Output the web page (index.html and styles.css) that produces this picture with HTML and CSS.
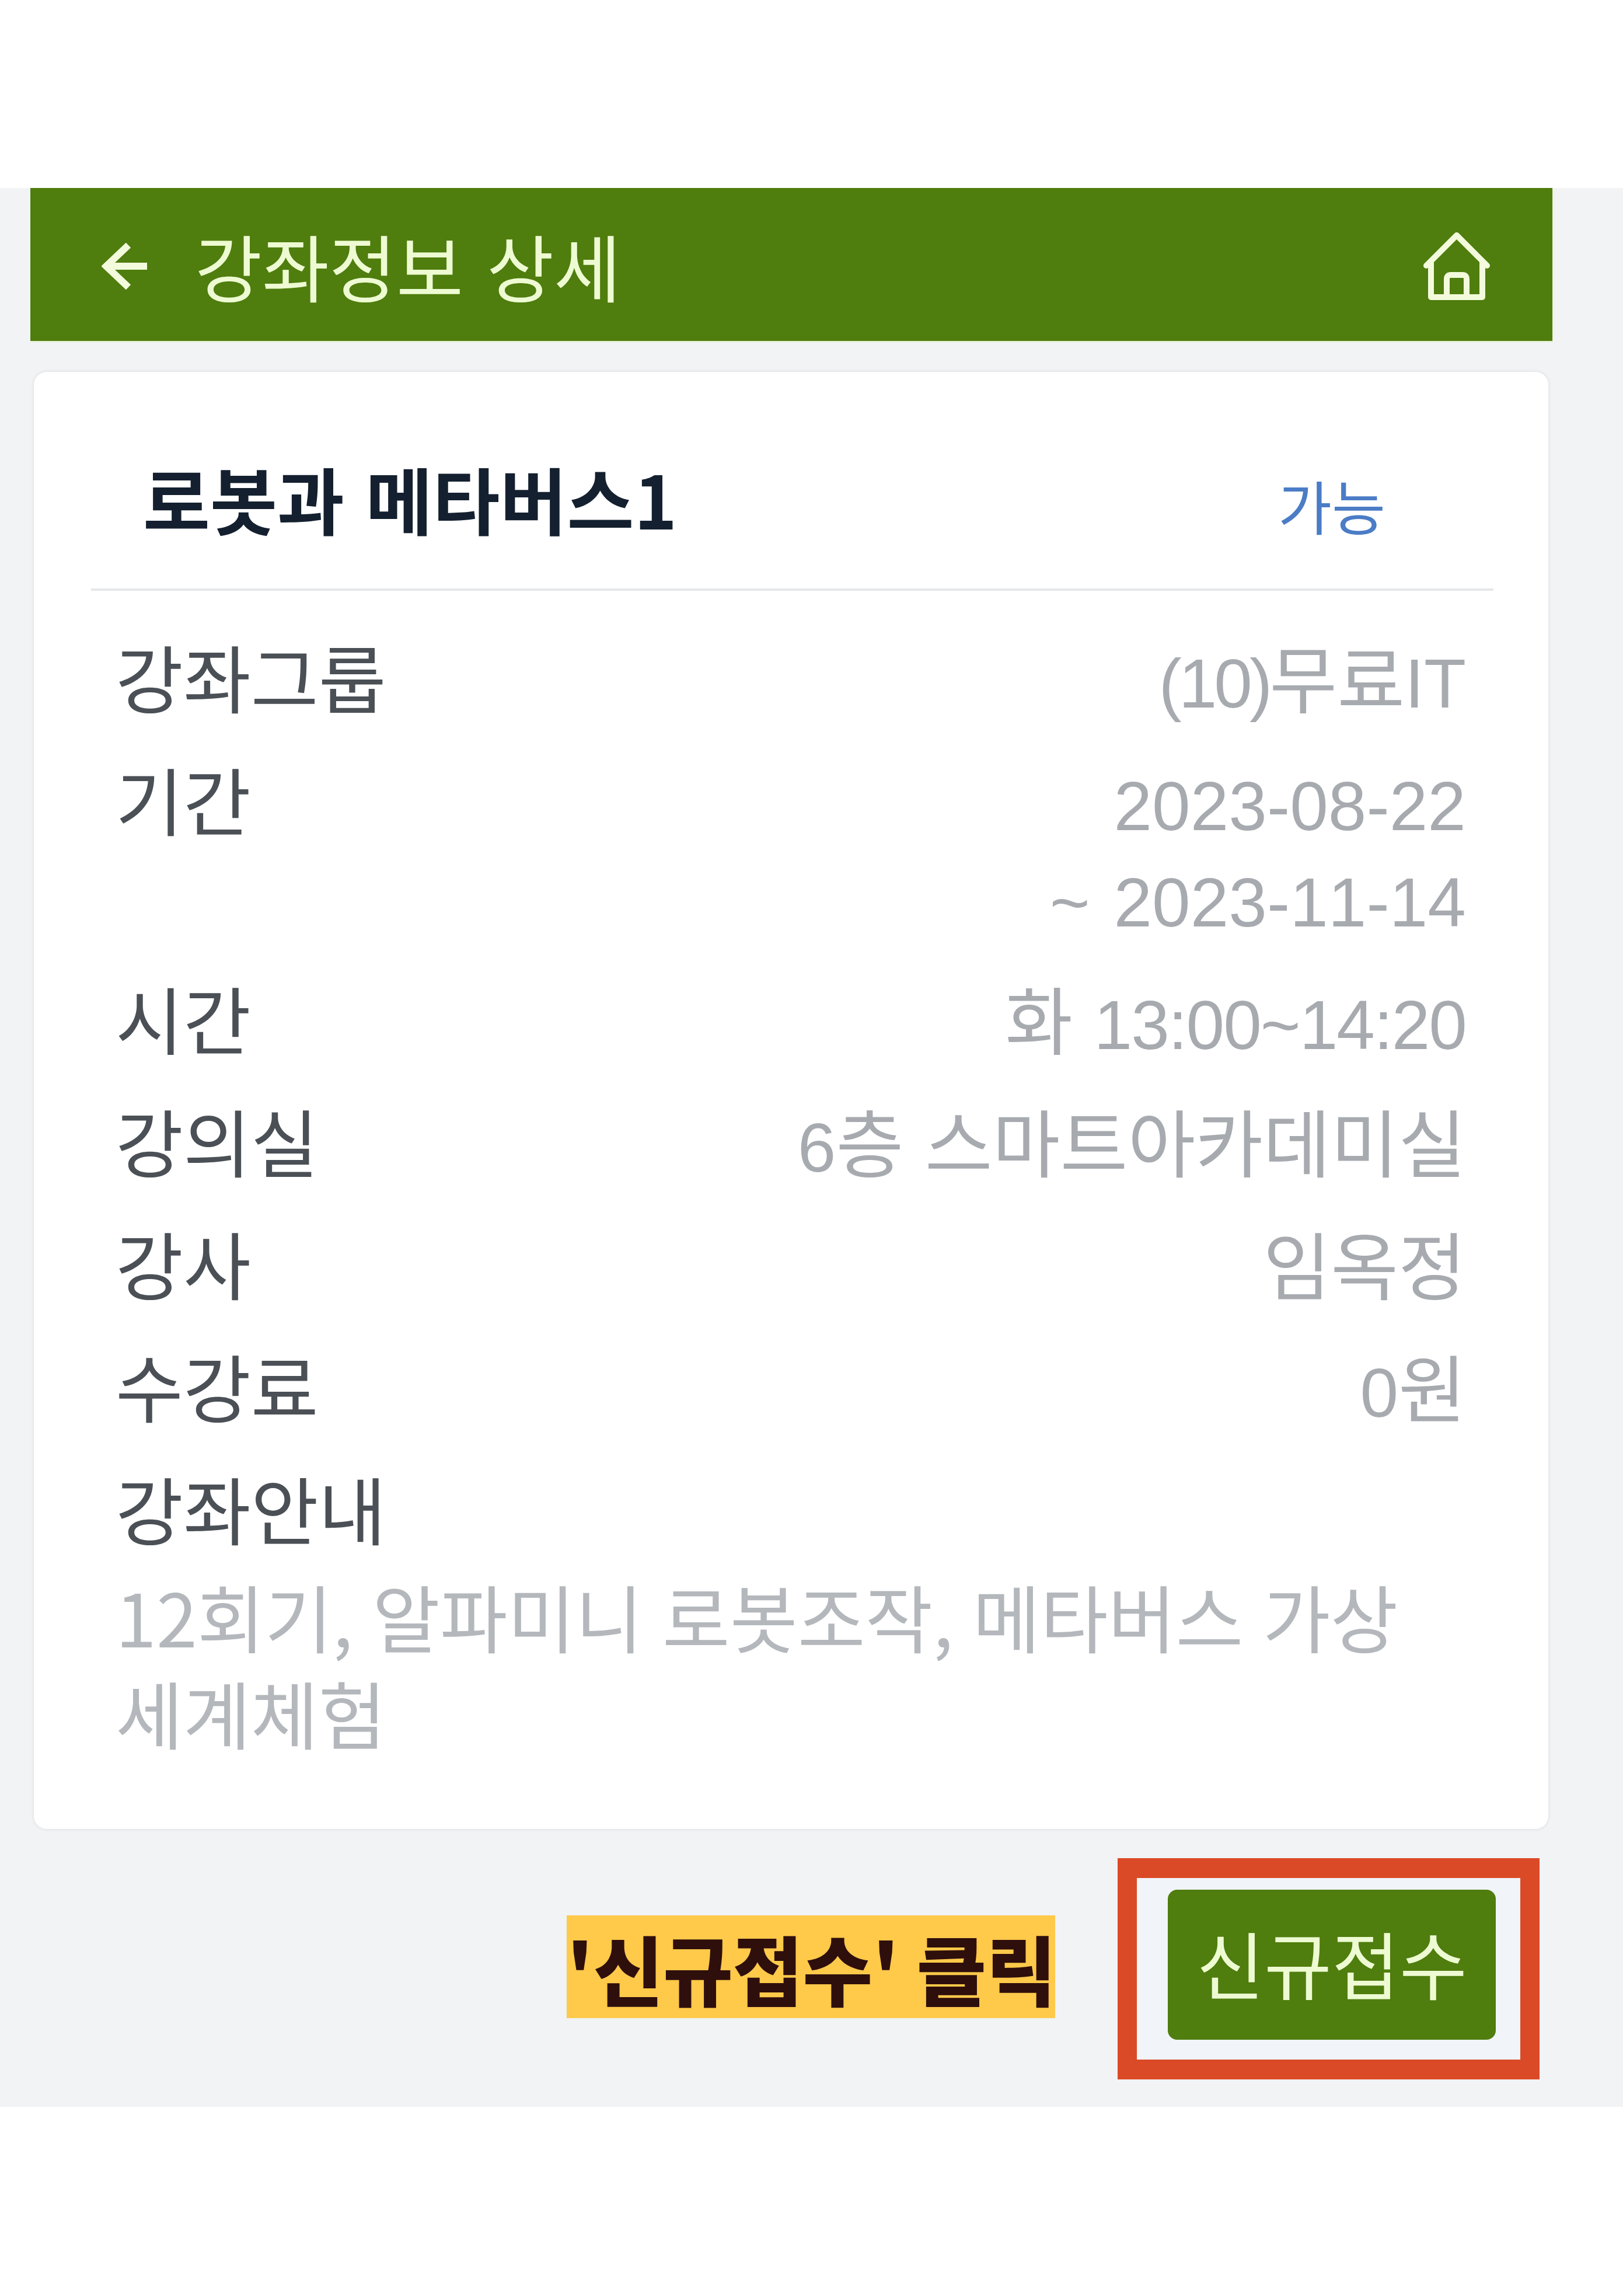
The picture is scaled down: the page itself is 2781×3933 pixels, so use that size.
FILE: index.html
```html
<!DOCTYPE html>
<html>
<head>
    <title>강좌정보 상세</title>
    <link rel="stylesheet" href="styles.css">
</head>
<body>
    <div class="screen">
        <div class="top-bar">
            <div class="top-left">
                <svg class="back-icon" viewBox="0 0 80 80">
                    <path d="M78 40H8M46 4L8 40l38 36" fill="none" stroke="#f3fbdc" stroke-width="12"/>
                </svg>
                <span class="top-title">강좌정보 상세</span>
            </div>
            <svg class="home-icon" viewBox="0 0 116 120">
                <path d="M5 58L57 6l52 52M13 50v62h88V50M40 112V81q0-7 7-7h20q7 0 7 7v31" fill="none" stroke="#f3fbdc" stroke-width="10" stroke-linejoin="round" stroke-linecap="round"/>
            </svg>
        </div>

        <div class="card">
            <div class="card-head">
                <h2 class="course-name">로봇과 메타버스1</h2>
                <span class="status">가능</span>
            </div>
            <div class="info-row">
                <span class="label">강좌그룹</span>
                <span class="value"><span class="num group">(10)</span>무료<span class="num">IT</span></span>
            </div>
            <div class="info-row">
                <span class="label">기간</span>
                <span class="value"><span class="num">2023-08-22</span><br><span class="num">~ 2023-11-14</span></span>
            </div>
            <div class="info-row">
                <span class="label">시간</span>
                <span class="value">화 <span class="num time">13:00~14:20</span></span>
            </div>
            <div class="info-row">
                <span class="label">강의실</span>
                <span class="value"><span class="num">6</span>층 스마트아카데미실</span>
            </div>
            <div class="info-row">
                <span class="label">강사</span>
                <span class="value">임옥정</span>
            </div>
            <div class="info-row">
                <span class="label">수강료</span>
                <span class="value"><span class="num">0</span>원</span>
            </div>
            <div class="info-row">
                <span class="label">강좌안내</span>
            </div>
            <p class="note">12회기, 알파미니 로봇조작, 메타버스 가상<br>세계체험</p>
        </div>

        <div class="action-row">
            <span class="hint">'신규접수' 클릭</span>
            <div class="highlight">
                <a class="apply-button">신규접수</a>
            </div>
        </div>
    </div>
</body>
</html>
```

FILE: styles.css
```css
body {
    margin: 0;
    background-color: #fff;
    font-family: "Noto Sans CJK KR", "Liberation Sans", sans-serif;
}

.screen {
    box-sizing: border-box;
    height: 3287px;
    margin-top: 322px;
    margin-bottom: 324px;
    padding-left: 52px;
    padding-right: 121px;
    background-color: #f1f3f5;
}

.top-bar {
    display: flex;
    justify-content: space-between;
    align-items: center;
    height: 262px;
    padding: 0 105px 0 122px;
    background-color: #4f7d0e;
    box-shadow: 1px 2px 0 #e4f0cd;
}

.top-left {
    display: flex;
    align-items: center;
    gap: 80px;
}

.back-icon {
    width: 80px;
    height: 80px;
    margin-top: 6px;
}

.top-title {
    color: #eefbd2;
    font-size: 125px;
    line-height: 1;
    word-spacing: 12px;
}

.home-icon {
    width: 116px;
    height: 120px;
    margin-top: 8px;
}

.card {
    box-sizing: border-box;
    height: 2496px;
    margin: 53px 7px 0 6px;
    padding: 0 94px 0 98px;
    background-color: #fff;
    border-radius: 22px;
    box-shadow: 0 0 6px rgba(0, 0, 0, 0.1);
    word-spacing: 8px;
}

.card-head {
    box-sizing: border-box;
    display: flex;
    justify-content: space-between;
    align-items: center;
    height: 375px;
    margin-bottom: 63px;
    padding: 60px 185px 0 89px;
    border-bottom: 4px solid #e6e7e9;
}

.course-name {
    margin: 0;
    color: #14202f;
    font-size: 125px;
    font-weight: 700;
    line-height: 1;
}

.status {
    margin-top: 24px;
    color: #4b7cc6;
    font-size: 100px;
    line-height: 1;
}

.info-row {
    display: flex;
    justify-content: space-between;
    margin-top: 45px;
    padding: 0 47px 0 42px;
    font-size: 126px;
    line-height: 165px;
}

.label {
    color: #4b5056;
}

.value {
    color: #a7abb0;
    text-align: right;
}

.num {
    font-family: "Liberation Sans", sans-serif;
    font-size: 118px;
    font-kerning: none;
    line-height: 1;
}

.group {
    letter-spacing: -5px;
}

.time {
    letter-spacing: -2px;
}

.note {
    margin: 20px 0 0;
    padding: 0 47px 0 42px;
    color: #b4b8bc;
    font-size: 126px;
    line-height: 165px;
    word-spacing: 5px;
}

.action-row {
    display: flex;
    justify-content: flex-end;
    align-items: center;
    gap: 107px;
    margin-top: 50px;
    padding-right: 22px;
}

.hint {
    width: 837px;
    height: 176px;
    margin-bottom: 7px;
    background-color: #ffc94a;
    color: #2e0f0c;
    font-size: 130px;
    font-weight: 900;
    line-height: 176px;
    text-align: center;
    white-space: nowrap;
}

.highlight {
    box-sizing: border-box;
    width: 723px;
    height: 379px;
    padding: 20px 42px 34px 53px;
    border: solid #da4a26;
    border-width: 34px 33px;
    background-color: #f1f4f9;
}

.apply-button {
    box-sizing: border-box;
    display: flex;
    justify-content: center;
    align-items: center;
    height: 100%;
    padding-bottom: 10px;
    background-color: #4f7d0e;
    border-radius: 16px;
    color: #eefbd2;
    font-size: 126px;
}
```
